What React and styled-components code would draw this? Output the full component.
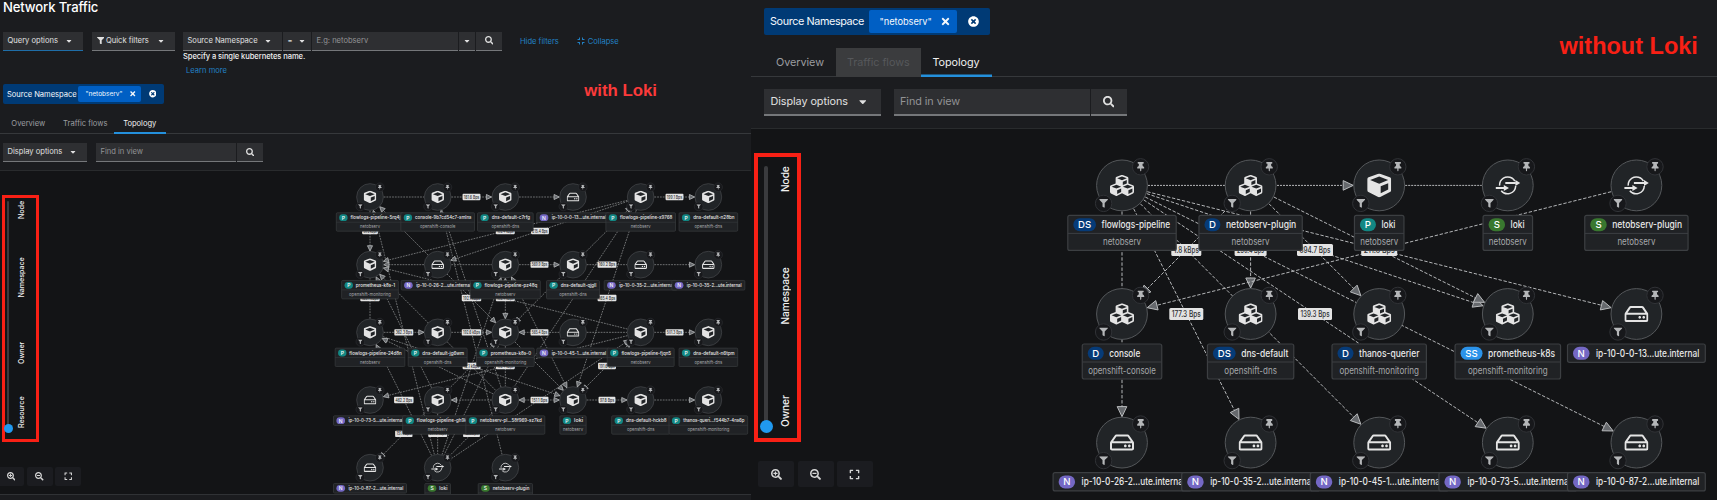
import React from "react";
import styled, { createGlobalStyle, ThemeProvider } from "styled-components";
import {
  FaCaretDown, FaCompress, FaCube, FaCubes, FaExpand, FaFilter, FaRegHdd,
  FaSearch, FaSearchMinus, FaSearchPlus, FaThumbtack, FaTimes, FaTimesCircle,
} from "react-icons/fa";

const Global = createGlobalStyle`
  * { box-sizing: border-box; }
  body { margin: 0; background: #1b1c1f; overflow: hidden; }
`;

const Page = styled.main`
  display: flex;
  width: 1717px;
  height: 500px;
  overflow: hidden;
  font-family: Inter, "Liberation Sans", sans-serif;
  color: #e0e0e0;
`;

const Panel = styled.section`
  position: relative;
  display: flex;
  flex-direction: column;
  width: ${(p) => p.$w}px;
  height: 500px;
  background: #1b1c1f;
  font-size: ${(p) => p.theme.font}px;
  letter-spacing: ${(p) => p.theme.track}px;
  svg { flex: none; }
`;

const Title = styled.h1`
  margin: 0;
  height: 31.5px;
  padding-left: 3px;
  font-size: 13.1px;
  line-height: 14px;
  font-weight: 500;
  letter-spacing: -0.15px;
  color: #fff;
`;

const Row = styled.div`
  display: flex;
  flex: none;
  align-items: ${(p) => p.$align || "stretch"};
  height: ${(p) => p.$h}px;
  margin-top: ${(p) => p.$mt || 0}px;
  padding-left: ${(p) => p.$pl || 0}px;
`;

const Control = styled.div`
  display: flex;
  flex: none;
  align-items: center;
  justify-content: ${(p) => (p.$center ? "center" : "space-between")};
  width: ${(p) => p.$w}px;
  margin-left: ${(p) => p.$ml || 0}px;
  padding: 0 ${(p) => (p.$center ? 0 : p.$pr || p.theme.padRight)}px 0 ${(p) => (p.$center ? 0 : p.theme.padLeft)}px;
  background: #2e2f32;
  border-bottom: ${(p) => p.theme.rule}px solid ${(p) => (p.$active ? "#1f6ea8" : "#75777a")};
  color: ${(p) => (p.$muted ? "#929395" : "#e0e0e0")};
  white-space: nowrap;
`;

const WithIcon = styled.span`
  display: flex;
  align-items: center;
  gap: 2px;
`;

const Link = styled.a`
  display: flex;
  align-items: center;
  gap: 3px;
  margin-left: ${(p) => p.$ml}px;
  color: #2281c4;
  white-space: nowrap;
`;

const Hint = styled.div`
  height: 12px;
  padding-left: 183px;
  line-height: 12px;
  font-weight: 500;
  letter-spacing: -0.09px;
  color: #f0f0f0;
`;

const Learn = styled(Link)`
  height: 16px;
  letter-spacing: 0;
`;

const ChipGroup = styled.div`
  display: flex;
  align-items: center;
  width: ${(p) => p.$w}px;
  padding-left: ${(p) => p.$pl}px;
  border-radius: 2px;
  background: #003a75;
  color: #f4f8fc;
  white-space: nowrap;
`;

const ChipName = styled.span`
  width: ${(p) => p.$w}px;
  letter-spacing: ${(p) => p.theme.nameTrack}px;
`;

const Chip = styled.span`
  display: flex;
  align-items: center;
  justify-content: space-between;
  width: ${(p) => p.$w}px;
  height: ${(p) => p.$h}px;
  margin-right: ${(p) => p.$mr}px;
  padding: 0 ${(p) => p.$pr}px 0 ${(p) => p.$pl}px;
  border-radius: 2px;
  background: #005fc4;
  font-size: 0.86em;
`;

const Tabs = styled(Row)`
  border-bottom: 1px solid #36383b;
`;

const Tab = styled.div`
  display: flex;
  align-items: center;
  justify-content: center;
  width: ${(p) => p.$w}px;
  height: ${(p) => p.$h}px;
  color: ${(p) => (p.$current ? "#f0f0f0" : p.$disabled ? "#56585b" : "#9b9da0")};
  background: ${(p) => (p.$disabled ? "#3b3c3e" : "transparent")};
  box-shadow: ${(p) => (p.$current ? `inset 0 -${p.theme.mark}px #2490dc` : "none")};
  white-space: nowrap;
`;

const Canvas = styled.div`
  position: relative;
  flex: none;
  height: ${(p) => p.$h}px;
  margin-top: ${(p) => p.$mt}px;
  border-top: 1px solid #292b2d;
  border-bottom: ${(p) => (p.$foot ? "1px solid #303235" : "0")};
  background: #131416;
  overflow: hidden;
`;

const Graph = styled.svg`
  position: absolute;
  inset: 0;
  display: block;
`;

const Caption = styled.div`
  position: absolute;
  left: ${(p) => p.$x}px;
  top: ${(p) => p.$y}px;
  font: bold ${(p) => p.$size}px/1 "Liberation Sans", Arial, sans-serif;
  letter-spacing: 0;
  white-space: nowrap;
  color: ${(p) => p.$color};
`;

const SliderBox = styled.div`
  position: absolute;
  left: ${(p) => p.$x}px;
  top: ${(p) => p.$y}px;
  display: flex;
  width: ${(p) => p.$w}px;
  height: ${(p) => p.$h}px;
  padding: ${(p) => p.$pad};
  border: ${(p) => p.$b}px solid #f82015;
`;

const Rail = styled.div`
  display: flex;
  align-items: flex-end;
  justify-content: center;
  width: ${(p) => p.$w}px;
  height: ${(p) => p.$h}px;
  border-radius: 2px;
  background: #3a3b3e;
`;

const Knob = styled.i`
  flex: none;
  width: ${(p) => p.$d}px;
  height: ${(p) => p.$d}px;
  margin-bottom: -${(p) => p.$d / 2}px;
  border-radius: 50%;
  background: #2099f0;
`;

const Steps = styled.div`
  display: flex;
  flex-direction: column;
  margin-left: ${(p) => p.$ml}px;
`;

const Step = styled.span`
  writing-mode: vertical-rl;
  transform: rotate(180deg);
  height: ${(p) => p.$h}px;
  width: ${(p) => p.theme.stepWidth}px;
  margin-top: ${(p) => p.$gap}px;
  line-height: ${(p) => p.theme.stepWidth}px;
  font-size: ${(p) => p.theme.stepFont}px;
  letter-spacing: -0.1px;
  font-weight: 500;
  white-space: nowrap;
  color: #f2f2f2;
`;

const ZoomBar = styled.div`
  position: absolute;
  left: ${(p) => p.$x}px;
  top: ${(p) => p.$y}px;
  display: flex;
  gap: ${(p) => p.$gap}px;
`;

const ZoomButton = styled.button`
  display: flex;
  align-items: center;
  justify-content: center;
  width: ${(p) => p.$w}px;
  height: ${(p) => p.$h}px;
  padding: 0;
  border: 0;
  border-radius: 2px;
  background: #1b1c20;
  color: #d6d6d6;
`;

const Disc = styled.circle`
  fill: #212427;
  stroke: #54575a;
  stroke-width: 1;
`;
const Decorator = styled.circle`
  fill: #17181b;
  stroke: #303236;
  stroke-width: 1;
`;
const Plate = styled.rect`
  fill: #202225;
  stroke: #3c3f42;
  stroke-width: 1.2;
`;
const Divider = styled.line`
  stroke: #3c3f42;
`;
const Name = styled.text`
  font-size: 9.8px;
  font-weight: 500;
  letter-spacing: 0;
  fill: #e8e8e8;
`;
const Sub = styled.text`
  font-size: 9.2px;
  letter-spacing: 0;
  text-anchor: middle;
  fill: #a6a8ab;
`;
const Kind = styled.text`
  font-size: 9.6px;
  font-weight: 500;
  letter-spacing: 0;
  text-anchor: middle;
  fill: #fff;
`;
const Line = styled.line`
  stroke: ${(p) => (p.$faint ? "#77797b" : "#b4b6b8")};
  stroke-width: ${(p) => (p.$faint ? 0.9 : 1)};
  stroke-dasharray: ${(p) => (p.$faint ? "1.8 1" : p.$flat ? "2 1" : "3.4 1.7")};
`;
const Head = styled.polygon`
  fill: #66696d;
  stroke: #b9bbbd;
  stroke-width: ${(p) => p.$stroke};
`;
const RatePlate = styled.rect`
  fill: #e3e3e3;
`;
const Rate = styled.text`
  font-size: 8.4px;
  font-weight: 500;
  letter-spacing: 0;
  text-anchor: middle;
  fill: #2b2d30;
`;

const KINDS = {
  P: ["#128783", 16], N: ["#7468c4", 16.5], S: ["#39782f", 16.5],
  D: ["#063b78", 16], DS: ["#063b78", 22.7], SS: ["#2b93ea", 22],
};

function ServiceIcon() {
  return (
    <g fill="none" stroke="#e6e6e6" strokeWidth="1.5">
      <path d="M-7.3 -4.2A8.2 8.2 0 0 1 7 -4.4M7.9 .6A8.2 8.2 0 0 1 -6.6 5.4M-8.2 .2A8.2 8.2 0 0 1 -7.3 -4.2" />
      <path d="M-12 2.6H-3M-2.5 -2.4H8" strokeWidth="2" />
      <path d="M-4 -.4L1.2 2.6L-4 5.6ZM7.6 -5.3L12.4 -2.4L7.6 .5Z" fill="#e6e6e6" stroke="none" />
    </g>
  );
}

function NodeIcon({ icon }) {
  if (icon === "service") return <ServiceIcon />;
  const Icon = { cube: FaCube, cubes: FaCubes, drive: FaRegHdd }[icon];
  return <Icon x={-12} y={-12} size={24} color="#e4e4e4" />;
}

function Node({ x, y, k, icon, kind, name, w, tw, sub, sw }) {
  const [color, bw] = KINDS[kind];
  const left = -w / 2;
  const textX = left + 5.5 + bw + 5.5 + (kind === "N" ? 1 : 0);
  const nameWidth = tw || w - 17 - bw - (kind === "N" ? 1 : 0);
  return (
    <g transform={`translate(${x} ${y}) scale(${k})`}>
      <Disc r="25.4" />
      <NodeIcon icon={icon} />
      <Decorator cx="18.6" cy="-18.6" r="8.2" />
      <FaThumbtack x="13.9" y="-23.5" size={9.6} color="#b5b7b9" />
      <Decorator cx="-18.4" cy="18" r="8.2" />
      <FaFilter x="-22.8" y="13.6" size={8.8} color="#b5b7b9" />
      <Plate x={left} y="30" width={w} height={sub ? 35 : 18.3} rx="2" />
      {sub && <Divider x1={left} x2={-left} y1="48" y2="48" />}
      <rect x={left + 5.5} y="32.8" width={bw} height="13" rx="6.5" fill={color} />
      <Kind x={left + 5.5 + bw / 2} y="42.8">{kind}</Kind>
      <Name x={textX} y="42.5" textLength={nameWidth} lengthAdjust="spacingAndGlyphs">{name}</Name>
      {sub && <Sub y="59.8" textLength={sw} lengthAdjust="spacingAndGlyphs">{sub}</Sub>}
    </g>
  );
}

/* An edge runs from rim to rim; "both" puts a head on each end, "none" on neither. */
function Edge({ a, b, k, heads = "end" }) {
  const dx = b.x - a.x;
  const dy = b.y - a.y;
  const len = Math.hypot(dx, dy);
  const ux = dx / len;
  const uy = dy / len;
  const r = 26 * k;
  const head = (n, s) => {
    const tx = n.x - s * ux * r;
    const ty = n.y - s * uy * r;
    const bx = tx - s * ux * 10 * k;
    const by = ty - s * uy * 10 * k;
    const h = 4.8 * k;
    return <Head $stroke={k < 1 ? 0.8 : 1} points={`${tx},${ty} ${bx - uy * h},${by + ux * h} ${bx + uy * h},${by - ux * h}`} />;
  };
  return (
    <g>
      <Line $faint={k < 1} $flat={dy === 0} x1={a.x + ux * r} y1={a.y + uy * r} x2={b.x - ux * r} y2={b.y - uy * r} />
      {heads !== "none" && head(b, 1)}
      {heads === "both" && head(a, -1)}
    </g>
  );
}

function RateTag({ x, y, k, text, w = 34 }) {
  return (
    <g transform={`translate(${x} ${y}) scale(${k})`}>
      <RatePlate x={-w / 2} y="-6" width={w} height="12" rx="1.5" />
      <Rate y="3" textLength={w - 5} lengthAdjust="spacingAndGlyphs">{text}</Rate>
    </g>
  );
}

const SUB_WIDTH = { netobserv: 38, "openshift-console": 67.6, "openshift-dns": 52.5, "openshift-monitoring": 79.5 };

function Topology({ width, height, top, left, k, nodes, edges, rates }) {
  return (
    <Graph width={width} height={height} viewBox={`${left} ${top} ${width} ${height}`}>
      {edges.map(([a, b, heads], i) => <Edge key={i} a={nodes[a]} b={nodes[b]} heads={heads} k={k} />)}
      {rates.map(([x, y, text, w], i) => <RateTag key={i} x={x} y={y} text={text} w={w} k={k} />)}
      {Object.entries(nodes).map(([id, n]) => <Node key={id} {...n} k={k} sw={SUB_WIDTH[n.sub]} />)}
    </Graph>
  );
}

const K = 0.526;
const NO = "netobserv";
const DNS = "openshift-dns";
const MON = "openshift-monitoring";

const place = (rows, x0, y0, step, k) => {
  const out = {};
  rows.forEach((row, r) => row.forEach(([icon, kind, name, w, sub, tw], c) => {
    out[`n${r + 1}${c + 1}`] = { x: x0 + c * step, y: y0 + r * step, icon, kind, name, w: w / k, sub, tw };
  }));
  return out;
};

const resourceNodes = place([
  [
    ["cube", "P", "flowlogs-pipeline-5rq4j", 67.4, NO],
    ["cube", "P", "console-9b7cd54c7-smlns", 73.7, "openshift-console"],
    ["cube", "P", "dns-default-c7rfg", 55.7, DNS],
    ["drive", "N", "ip-10-0-0-13...ute.internal", 72.5],
    ["cube", "P", "flowlogs-pipeline-x9768", 69.7, NO],
    ["cube", "P", "dns-default-n28bn", 58.7, DNS],
  ],
  [
    ["cube", "P", "prometheus-k8s-1", 56.7, MON],
    ["drive", "N", "ip-10-0-26-2...ute.internal", 73],
    ["cube", "P", "flowlogs-pipeline-pz48q", 70, NO],
    ["cube", "P", "dns-default-qjgll", 53, DNS],
    ["drive", "N", "ip-10-0-35-2...ute.internal", 73],
    ["drive", "N", "ip-10-0-35-2...ute.internal", 73],
  ],
  [
    ["cube", "P", "flowlogs-pipeline-24d8n", 69.7, NO],
    ["cube", "P", "dns-default-jg6wm", 59, DNS],
    ["cube", "P", "prometheus-k8s-0", 57.7, MON],
    ["drive", "N", "ip-10-0-45-1...ute.internal", 72.5],
    ["cube", "P", "flowlogs-pipeline-fjqn5", 67, NO],
    ["cube", "P", "dns-default-n6tpm", 58.7, DNS],
  ],
  [
    ["drive", "N", "ip-10-0-73-5...ute.internal", 73],
    ["cube", "P", "flowlogs-pipeline-gh9k8", 70, NO],
    ["cube", "P", "netobserv-pl...58f969-sz7kd", 79, NO],
    ["cube", "P", "loki", 26.3, NO],
    ["cube", "P", "dns-default-hckb8", 58, DNS],
    ["cube", "P", "thanos-queri...f544b7-4ns6p", 78.7, MON],
  ],
  [
    ["drive", "N", "ip-10-0-87-2...ute.internal", 73],
    ["service", "S", "loki", 25.7, NO],
    ["service", "S", "netobserv-plugin", 54.3, NO],
  ],
], 370, 197, 67.67, K);

const resourceEdges = [
  ["n11", "n12", "none"], ["n12", "n13"], ["n13", "n14"], ["n15", "n16"],
  ["n11", "n21"], ["n22", "n21"], ["n22", "n23", "none"], ["n23", "n24"], ["n24", "n25", "none"], ["n25", "n26"],
  ["n15", "n21"], ["n15", "n22"], ["n33", "n11", "both"], ["n53", "n12"], ["n43", "n12", "none"],
  ["n52", "n11"], ["n42", "n21"], ["n43", "n21"], ["n35", "n21"], ["n31", "n21", "none"],
  ["n23", "n33", "both"], ["n15", "n33", "both"], ["n15", "n43", "none"], ["n15", "n44"], ["n23", "n44", "both"],
  ["n33", "n44"], ["n31", "n44"], ["n43", "n44", "both"], ["n44", "n45"], ["n45", "n46"],
  ["n35", "n44", "both"], ["n35", "n41"], ["n52", "n35"], ["n52", "n31"], ["n52", "n23"],
  ["n52", "n33", "none"], ["n52", "n43", "none"], ["n42", "n52", "none"], ["n33", "n51", "both"],
  ["n31", "n32"], ["n32", "n33"], ["n34", "n33"], ["n34", "n35", "none"], ["n35", "n36"],
  ["n43", "n31"], ["n43", "n42"], ["n33", "n43", "none"],
];

const resourceRates = [
  [471.5, 197, "181.6 Bps"], [674.5, 197, "199.1 Bps"], [370, 231, "50.2 kBps", 30], [505.3, 231, "102.4 kBps", 36],
  [540, 231, "215.4 Bps"], [539.5, 264.7, "569.9 Bps"], [607, 264.7, "160.2 Bps", 36], [370, 298, "165.1 kBps", 37],
  [471.5, 298, "192.1 kBps", 37], [505.3, 298, "102.4 kBps", 36], [607, 298, "165.4 Bps", 36],
  [403.8, 332.3, "362.3 Bps", 36], [471.5, 332.3, "192.6 kBps", 37], [539.5, 332.3, "565.4 Bps"], [674.5, 332.3, "501.3 Bps"],
  [471.5, 366, "12.1 kBps"], [505.3, 366, "102.4 kBps", 36], [607, 366, "191.6 Bps"], [403.8, 400, "462.2 Bps", 37],
  [539.5, 400, "151.1 Bps"], [607, 400, "97.8 Bps", 32], [403.8, 433.8, "151.1 Bps", 33], [437.7, 433.8, "201.5 kBps", 36],
  [471.5, 433.8, "12.1 Bps", 32],
];

const ownerNodes = place([
  [
    ["cubes", "DS", "flowlogs-pipeline", 108.4, NO],
    ["cubes", "D", "netobserv-plugin", 103.3, NO],
    ["cube", "P", "loki", 49.5, NO, 14],
    ["service", "S", "loki", 49.5, NO, 14],
    ["service", "S", "netobserv-plugin", 103.3, NO],
  ],
  [
    ["cubes", "D", "console", 79.5, "openshift-console", 31],
    ["cubes", "DS", "dns-default", 86.3, DNS, 47.2],
    ["cubes", "D", "thanos-querier", 94.4, MON, 60.4],
    ["cubes", "SS", "prometheus-k8s", 105.5, MON, 67],
    ["drive", "N", "ip-10-0-0-13...ute.internal", 137.8],
  ],
  [
    ["drive", "N", "ip-10-0-26-2...ute.internal", 137.8],
    ["drive", "N", "ip-10-0-35-2...ute.internal", 137.8],
    ["drive", "N", "ip-10-0-45-1...ute.internal", 137.8],
    ["drive", "N", "ip-10-0-73-5...ute.internal", 137.8],
    ["drive", "N", "ip-10-0-87-2...ute.internal", 137.8],
  ],
], 1122, 185.4, 128.6, 1);

const ownerEdges = [
  ["n11", "n13"], ["n13", "n14", "none"], ["n11", "n31"], ["n12", "n22"], ["n12", "n21"], ["n15", "n21"],
  ["n11", "n33"], ["n11", "n32"], ["n11", "n25"], ["n11", "n24"], ["n11", "n35"], ["n11", "n34"],
  ["n12", "n23"], ["n12", "n24"],
];

const ownerRates = [
  [1186.3, 250, "1.8 kBps", 30], [1250.6, 250, "230.4 Bps", 32], [1315, 250, "894.7 Bps", 36], [1379.2, 250, "211.8 Bps", 36],
  [1186.3, 314, "177.3 Bps"], [1315, 314, "139.3 Bps"],
];

const smallTheme = { font: 7.6, track: -0.02, nameTrack: -0.05, padLeft: 4.5, padRight: 10, rule: 1.3, mark: 2, stepWidth: 10, stepFont: 7.2 };
const largeTheme = { font: 10.8, track: -0.05, nameTrack: -0.38, padLeft: 6.5, padRight: 13, rule: 2, mark: 2.6, stepWidth: 13, stepFont: 10.2 };

function LokiPanel() {
  return (
    <ThemeProvider theme={smallTheme}>
      <Panel $w={751}>
        <Title>Network Traffic</Title>
        <Row $h={19} $pl={3}>
          <Control $w={80} $active>Query options<FaCaretDown size={8} /></Control>
          <Control $w={82.5} $ml={9}><WithIcon><FaFilter size={7.5} />Quick filters</WithIcon><FaCaretDown size={8} /></Control>
          <Control $w={99} $ml={8.5}>Source Namespace<FaCaretDown size={8} /></Control>
          <Control $w={28} $ml={1} $pr={5}>=<FaCaretDown size={8} /></Control>
          <Control $w={146} $ml={1} $muted>E.g: netobserv</Control>
          <Control $w={16} $ml={1} $center><FaCaretDown size={8} /></Control>
          <Control $w={26} $ml={1} $center><FaSearch size={8.5} /></Control>
          <Link $ml={18}>Hide filters</Link>
          <Link $ml={18}><FaCompress size={8} />Collapse</Link>
        </Row>
        <Hint>Specify a single kubernetes name.</Hint>
        <Learn $ml={186}>Learn more</Learn>
        <Row $h={19.5} $mt={5.8} $pl={3}>
          <ChipGroup $w={161} $pl={4}>
            <ChipName $w={71}>Source Namespace</ChipName>
            <Chip $w={63} $h={16.5} $pl={7.5} $pr={4.5} $mr={7.5}>"netobserv"<FaTimes size={7.5} /></Chip>
            <FaTimesCircle size={7.6} color="#fff" />
          </ChipGroup>
        </Row>
        <Tabs $h={21} $mt={9.2}>
          <Tab $w={56.5} $h={21}>Overview</Tab>
          <Tab $w={57.5} $h={21}>Traffic flows</Tab>
          <Tab $w={51.5} $h={21} $current>Topology</Tab>
        </Tabs>
        <Row $h={19} $mt={9} $pl={3}>
          <Control $w={84}>Display options<FaCaretDown size={8} /></Control>
          <Control $w={140} $ml={9} $muted>Find in view</Control>
          <Control $w={26} $ml={1} $center><FaSearch size={8.5} /></Control>
        </Row>
        <Canvas $h={325} $mt={8} $foot>
          <Topology width={751} height={325} top={171} left={0} k={K} nodes={resourceNodes} edges={resourceEdges} rates={resourceRates} />
          <SliderBox $x={2} $y={23.7} $w={37} $h={247} $b={3} $pad="3px 0 0 2px">
            <Rail $w={2.4} $h={228}><Knob $d={9.4} /></Rail>
            <Steps $ml={7.5}>
              <Step $h={18} $gap={0.5}>Node</Step>
              <Step $h={38.5} $gap={39.5}>Namespace</Step>
              <Step $h={22} $gap={44.5}>Owner</Step>
              <Step $h={31} $gap={33}>Resource</Step>
            </Steps>
          </SliderBox>
          <ZoomBar $x={-2} $y={296} $gap={2.5}>
            <ZoomButton $w={26} $h={19}><FaSearchPlus size={8.5} /></ZoomButton>
            <ZoomButton $w={26} $h={19}><FaSearchMinus size={8.5} /></ZoomButton>
            <ZoomButton $w={25.5} $h={19}><FaExpand size={8.5} /></ZoomButton>
          </ZoomBar>
        </Canvas>
        <Caption $x={584.3} $y={83} $size={16.8} $color="#fc3a3a">with Loki</Caption>
      </Panel>
    </ThemeProvider>
  );
}

function NoLokiPanel() {
  return (
    <ThemeProvider theme={largeTheme}>
      <Panel $w={966}>
        <Row $h={27} $mt={8} $pl={13}>
          <ChipGroup $w={225.5} $pl={6}>
            <ChipName $w={99}>Source Namespace</ChipName>
            <Chip $w={87.5} $h={23} $pl={10.5} $pr={6} $mr={11}>"netobserv"<FaTimes size={11} /></Chip>
            <FaTimesCircle size={11} color="#fff" />
          </ChipGroup>
        </Row>
        <Tabs $h={29} $mt={13} $pl={13}>
          <Tab $w={72} $h={28.5}>Overview</Tab>
          <Tab $w={84.5} $h={28.5} $disabled>Traffic flows</Tab>
          <Tab $w={71} $h={29} $current>Topology</Tab>
        </Tabs>
        <Row $h={27} $mt={12.3} $pl={13}>
          <Control $w={117}>Display options<FaCaretDown size={11.5} /></Control>
          <Control $w={196} $ml={12.5} $muted>Find in view</Control>
          <Control $w={36} $ml={1} $center><FaSearch size={11.5} /></Control>
        </Row>
        <Canvas $h={372} $mt={11.7}>
          <Topology width={966} height={372} top={129} left={751} k={1} nodes={ownerNodes} edges={ownerEdges} rates={ownerRates} />
          <SliderBox $x={3.3} $y={23.7} $w={47} $h={289} $b={4} $pad="9px 0 0 6px">
            <Rail $w={3.6} $h={261}><Knob $d={13} /></Rail>
            <Steps $ml={11.2}>
              <Step $h={26} $gap={0}>Node</Step>
              <Step $h={54.5} $gap={78.5}>Namespace</Step>
              <Step $h={30} $gap={72.5}>Owner</Step>
            </Steps>
          </SliderBox>
          <ZoomBar $x={7} $y={332.5} $gap={3.5}>
            <ZoomButton $w={36} $h={25.5}><FaSearchPlus size={11} /></ZoomButton>
            <ZoomButton $w={36} $h={25.5}><FaSearchMinus size={11} /></ZoomButton>
            <ZoomButton $w={35.5} $h={25.5}><FaExpand size={11} /></ZoomButton>
          </ZoomBar>
        </Canvas>
        <Caption $x={808.5} $y={34.5} $size={23.5} $color="#f82015">without Loki</Caption>
      </Panel>
    </ThemeProvider>
  );
}

export default function App() {
  return (
    <Page>
      <Global />
      <LokiPanel />
      <NoLokiPanel />
    </Page>
  );
}
